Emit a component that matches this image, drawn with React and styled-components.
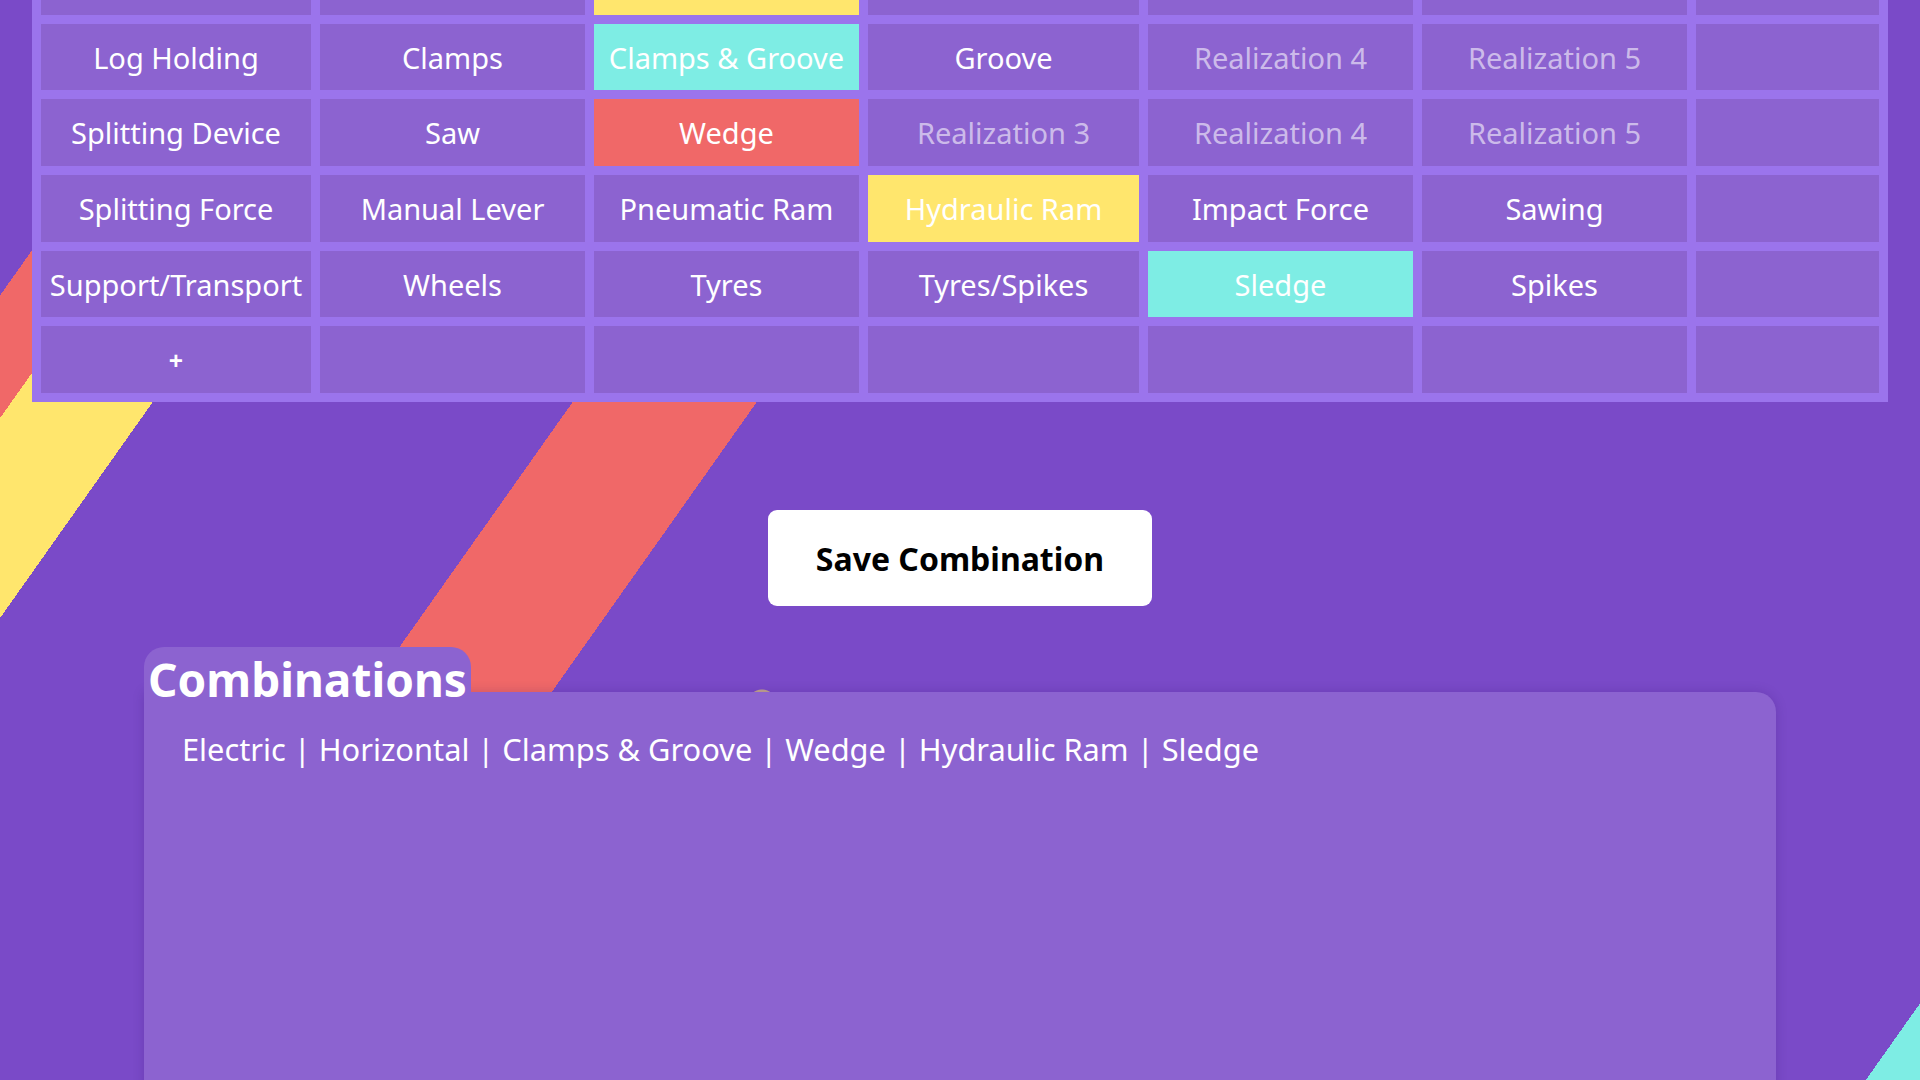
import React from "react";
import styled, { createGlobalStyle } from "styled-components";

const GlobalStyle = createGlobalStyle`
  html, body {
    margin: 0;
    padding: 0;
  }
  body {
    font-family: "Noto Sans", "Open Sans", sans-serif;
  }
  * { box-sizing: border-box; }
`;

const PURPLE = "#7a4ac8";
const CELL = "#8c63d0";
const TABLE = "#9b74ec";
const TONES = {
  cyan: "#7eede4",
  red: "#f06868",
  yellow: "#ffe66d",
};

const ANGLE = "125.26deg";

const Page = styled.div`
  width: 100%;
  height: 100vh;
  overflow: hidden;
  color: #fff;
  background-color: ${PURPLE};
  background-image:
    radial-gradient(circle at 762px 704px, #c3a48e 0 14px, transparent 15px),
    linear-gradient(
      ${ANGLE},
      transparent 699.7px,
      ${TONES.red} 699.7px,
      ${TONES.red} 850px,
      transparent 850px
    ),
    linear-gradient(
      ${ANGLE},
      transparent 170.6px,
      ${TONES.red} 170.6px,
      ${TONES.red} 241.4px,
      ${TONES.yellow} 241.4px,
      ${TONES.yellow} 356.8px,
      transparent 356.8px,
      transparent 2147px,
      ${TONES.cyan} 2147px
    );
  background-size: 100% 100%, 100% 980px, 100% 100%;
  background-repeat: no-repeat;
`;

const Matrix = styled.div`
  display: grid;
  grid-template-columns: 270px 265px 265px 271px 265px 265px 183px;
  grid-auto-rows: 66.7px;
  gap: 9px;
  padding: 9px;
  margin: -61px 32px 0;
  background: ${TABLE};
`;

const Cell = styled.div`
  display: flex;
  align-items: center;
  justify-content: center;
  background: ${(p) => (p.$tone ? TONES[p.$tone] : CELL)};
  color: ${(p) => (p.$dim ? "rgba(255,255,255,0.58)" : "#fff")};
  font-size: ${(p) => (p.$add ? "25px" : "29px")};
  font-weight: ${(p) => (p.$add ? 700 : 400)};
  white-space: nowrap;
  user-select: none;
`;

const Actions = styled.div`
  display: flex;
  justify-content: center;
  margin-top: 108px;
`;

const SaveButton = styled.button`
  height: 96px;
  padding: 0 48px;
  border: none;
  border-radius: 9px;
  background: #fff;
  color: #000;
  font-family: "Noto Sans", "Open Sans", sans-serif;
  font-size: 32px;
  font-weight: 700;
  cursor: pointer;
`;

const Combos = styled.section`
  width: 85%;
  margin: 41px auto 0;
`;

const Tab = styled.h2`
  position: relative;
  z-index: 1;
  width: fit-content;
  height: 45px;
  margin: 0;
  padding: 0 4px;
  border-radius: 20px 20px 0 0;
  background: ${CELL};
  font-size: 46px;
  font-weight: 700;
  line-height: 64px;
  color: #fff;
`;

const ComboBox = styled.div`
  min-height: 520px;
  padding: 37px 38px;
  background: ${CELL};
  border-radius: 0 20px 0 0;
  box-shadow: 0 0 12px rgba(40, 10, 90, 0.18);
`;

const ComboLine = styled.p`
  margin: 0;
  font-size: 30.8px;
  line-height: 40px;
  color: #fff;
`;

const c = (text, extra = {}) => ({ text, ...extra });

const ROWS = [
  [c("Orientation"), c("Vertical"), c("Horizontal", { tone: "yellow" }), c("Angled"), c("Realization 4", { dim: true }), c("Realization 5", { dim: true }), c("")],
  [c("Log Holding"), c("Clamps"), c("Clamps & Groove", { tone: "cyan" }), c("Groove"), c("Realization 4", { dim: true }), c("Realization 5", { dim: true }), c("")],
  [c("Splitting Device"), c("Saw"), c("Wedge", { tone: "red" }), c("Realization 3", { dim: true }), c("Realization 4", { dim: true }), c("Realization 5", { dim: true }), c("")],
  [c("Splitting Force"), c("Manual Lever"), c("Pneumatic Ram"), c("Hydraulic Ram", { tone: "yellow" }), c("Impact Force"), c("Sawing"), c("")],
  [c("Support/Transport"), c("Wheels"), c("Tyres"), c("Tyres/Spikes"), c("Sledge", { tone: "cyan" }), c("Spikes"), c("")],
  [c("+", { add: true }), c(""), c(""), c(""), c(""), c(""), c("")],
];

const COMBINATION = ["Electric", "Horizontal", "Clamps & Groove", "Wedge", "Hydraulic Ram", "Sledge"];

export default function App() {
  return (
    <>
      <GlobalStyle />
      <Page>
        <Matrix>
          {ROWS.map((row, r) =>
            row.map((cell, i) => (
              <Cell key={`${r}-${i}`} $tone={cell.tone} $dim={cell.dim} $add={cell.add}>
                {cell.text}
              </Cell>
            ))
          )}
        </Matrix>
        <Actions>
          <SaveButton type="button">Save Combination</SaveButton>
        </Actions>
        <Combos>
          <Tab>Combinations</Tab>
          <ComboBox>
            <ComboLine>{COMBINATION.join(" | ")}</ComboLine>
          </ComboBox>
        </Combos>
      </Page>
    </>
  );
}
